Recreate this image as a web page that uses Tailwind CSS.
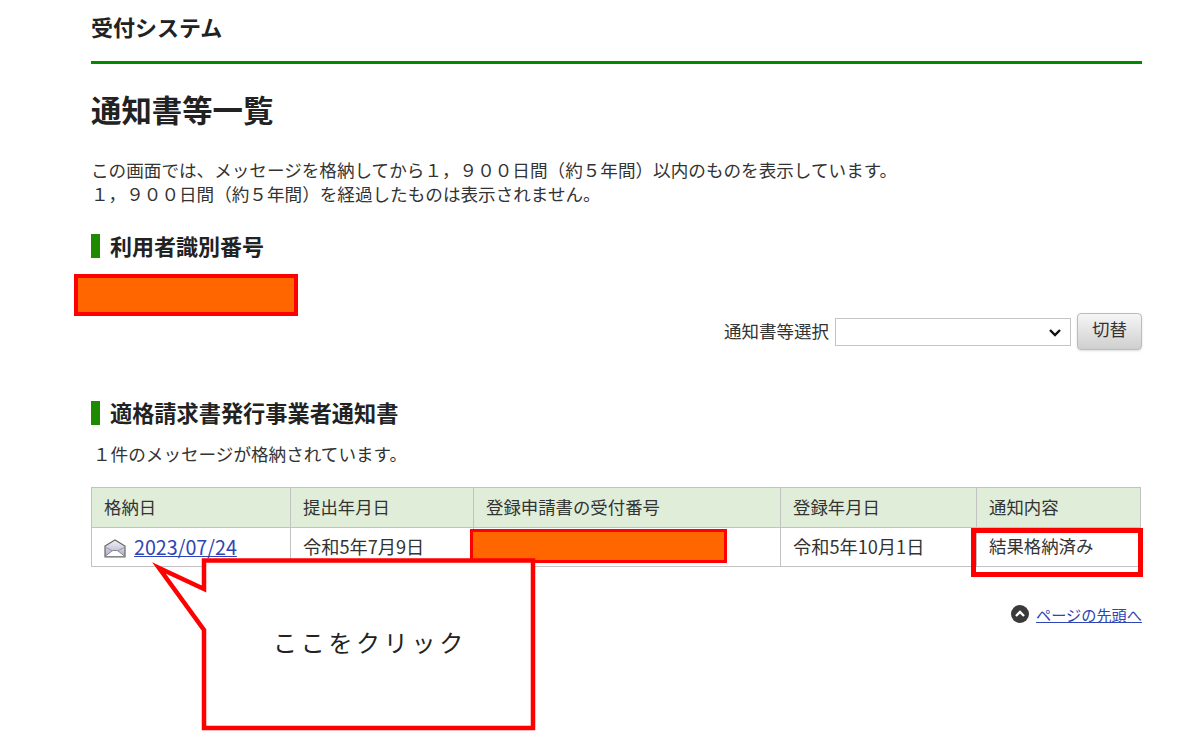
<!DOCTYPE html>
<html lang="ja">
<head>
    <meta charset="UTF-8">
    <meta name="viewport" content="width=device-width, initial-scale=1.0">
    <title>通知書等一覧</title>
    <script src="https://cdn.jsdelivr.net/npm/@tailwindcss/browser@4"></script>
</head>
<body class="bg-white text-[#333] font-['Noto_Sans_CJK_JP','Liberation_Sans',sans-serif] text-[17.4px] overflow-hidden">
<div class="relative w-[1200px] h-[737px] overflow-hidden">
    <main class="w-[1051px] ml-[91px]">
        <header class="h-[64px] border-b-[3px] border-[#008a00] pt-[10px]">
            <p class="text-[22px] leading-[32px] font-bold text-[#222]">受付システム</p>
        </header>

        <h1 class="mt-[23px] text-[30.4px] leading-[44px] font-bold text-[#222]">通知書等一覧</h1>

        <div class="mt-[27px] leading-[24px] text-[17.6px]">
            <p>この画面では、メッセージを格納してから１，９００日間（約５年間）以内のものを表示しています。</p>
            <p>１，９００日間（約５年間）を経過したものは表示されません。</p>
        </div>

        <h2 class="mt-[27px] h-[25px] flex items-center gap-[10px] text-[22px] font-bold text-[#222]">
            <span class="w-[9px] h-[24px] bg-[#1e8a00]"></span>
            <span class="leading-[25px]">利用者識別番号</span>
        </h2>

        <div class="mt-[55px] h-[37px] flex items-center justify-end">
            <label class="mr-[6px] text-[17.5px]">通知書等選択</label>
            <div class="relative mr-[6px]">
                <select class="block appearance-none w-[236px] h-[28px] bg-white border border-[#c4c4c4] text-[16px]"><option></option></select>
                <svg class="absolute right-[9px] top-[10px]" width="14" height="9" viewBox="0 0 14 9">
                    <path d="M2 2 L7 7 L12 2" fill="none" stroke="#111" stroke-width="2.4"/>
                </svg>
            </div>
            <button class="w-[65px] h-[37px] rounded-[4px] border border-[#bbb] bg-gradient-to-b from-[#f6f6f6] to-[#cfcfcf] text-[17.5px] pb-[4px] shadow-sm">切替</button>
        </div>

        <h2 class="mt-[50px] h-[25px] flex items-center gap-[10px] text-[22.2px] font-bold text-[#222]">
            <span class="w-[9px] h-[24px] bg-[#1e8a00]"></span>
            <span class="leading-[25px]">適格請求書発行事業者通知書</span>
        </h2>

        <p class="mt-[17px] ml-[2px] leading-[24px] text-[17.6px]">１件のメッセージが格納されています。</p>

        <table class="mt-[21px] w-[1050px] table-fixed border-collapse border border-[#c2c2c2]">
            <thead>
                <tr class="h-[40px] bg-[#e0eed9]">
                    <th class="w-[199px] border border-[#c2c2c2] px-[12px] text-left font-normal">格納日</th>
                    <th class="w-[183px] border border-[#c2c2c2] px-[12px] text-left font-normal">提出年月日</th>
                    <th class="w-[307px] border border-[#c2c2c2] px-[12px] text-left font-normal">登録申請書の受付番号</th>
                    <th class="w-[196px] border border-[#c2c2c2] px-[12px] text-left font-normal">登録年月日</th>
                    <th class="border border-[#c2c2c2] px-[12px] text-left font-normal">通知内容</th>
                </tr>
            </thead>
            <tbody>
                <tr class="h-[39px]">
                    <td class="border border-[#c2c2c2] px-[12px]">
                        <div class="flex items-center gap-[8px]">
                            <svg width="22" height="20" viewBox="0 0 22 20" class="mt-[2px] shrink-0">
                                <defs>
                                    <linearGradient id="mail" x1="0" y1="0" x2="0" y2="1">
                                        <stop offset="0" stop-color="#f2f2f6"/>
                                        <stop offset="1" stop-color="#a8a8d0"/>
                                    </linearGradient>
                                </defs>
                                <path d="M1 8 L11 2 L21 8 V19 H1 Z" fill="url(#mail)" stroke="#666" stroke-width="1.2"/>
                                <path d="M1 18.5 L8.5 12.5 H13.5 L21 18.5 Z" fill="#fff" stroke="#888"/>
                                <path d="M1 9 L8.5 13 M21 9 L13.5 13" stroke="#999"/>
                            </svg>
                            <a href="#" class="text-[#2f45b5] underline text-[19.7px]">2023/07/24</a>
                        </div>
                    </td>
                    <td class="border border-[#c2c2c2] px-[12px] text-[18.2px]">令和5年7月9日</td>
                    <td class="border border-[#c2c2c2] px-[12px]"></td>
                    <td class="border border-[#c2c2c2] px-[12px] text-[18.2px]">令和5年10月1日</td>
                    <td class="border border-[#c2c2c2] px-[12px] pb-[2px]">結果格納済み</td>
                </tr>
            </tbody>
        </table>

        <div class="mt-[36px] flex items-center justify-end gap-[7px] text-[15.2px]">
            <svg width="18" height="18" viewBox="0 0 18 18">
                <circle cx="9" cy="9" r="9" fill="#3a3a3a"/>
                <path d="M5 11 L9 7 L13 11" fill="none" stroke="#fff" stroke-width="2.4"/>
            </svg>
            <a href="#" class="text-[#2f45b5] underline">ページの先頭へ</a>
        </div>
    </main>

    <!-- annotations drawn over the page -->
    <div class="absolute left-[74px] top-[274px] w-[224px] h-[42px] bg-[#ff6600] border-[4px] border-[#ff0000]"></div>
    <div class="absolute left-[470px] top-[529px] w-[257px] h-[34px] bg-[#ff6600] border-[3px] border-[#ff0000]"></div>
    <div class="absolute left-[971px] top-[528px] w-[172px] h-[49px] border-[5px] border-[#ff0000]"></div>

    <svg class="absolute left-0 top-0" width="1200" height="737" viewBox="0 0 1200 737">
        <path d="M204 560.5 H533 V728 H204 V630 L159 568 L204 589 Z" fill="#fff" stroke="#ff0000" stroke-width="4.5"/>
    </svg>
    <p class="absolute left-[273px] top-[624px] text-[24px] leading-[36px] tracking-[3.7px] text-[#222]">ここをクリック</p>
</div>
</body>
</html>
